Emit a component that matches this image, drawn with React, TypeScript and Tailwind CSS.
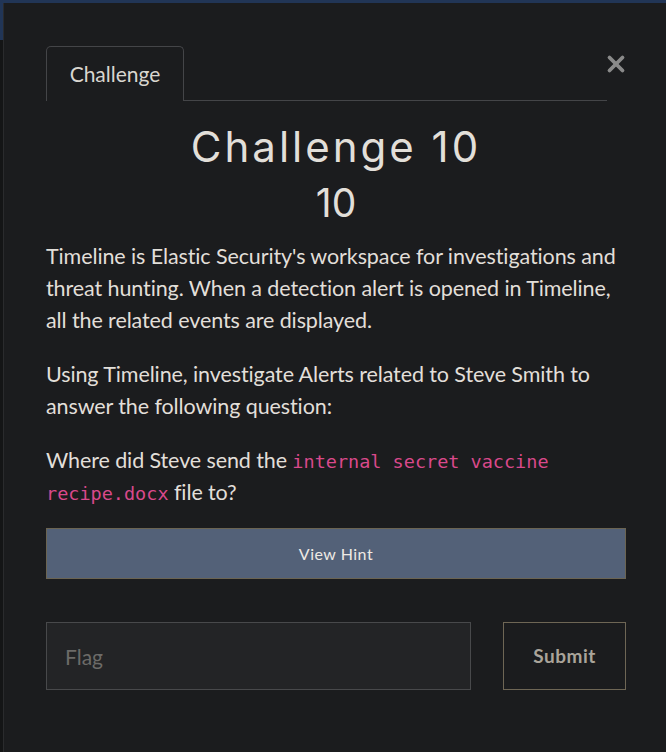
import { X } from "lucide-react";

export default function App() {
    return (
        <div className="relative h-[752px] w-[666px] overflow-hidden bg-[#141516]" style={{ fontFamily: "Lato, 'Open Sans', sans-serif" }}>
            {/* backdrop header strip */}
            <div className="absolute left-0 top-0 h-[40px] w-full bg-[#213556]" />

            {/* Modal */}
            <div className="absolute left-[3px] top-[3px] h-[800px] w-[700px] border-l border-[#2a2b2d] bg-[#1b1c1e]">
                <div className="w-[623px] pl-[42px] pt-[44px]">
                    {/* Tabs */}
                    <div className="flex items-start">
                        <div className="flex h-[54px] flex-1 items-end border-b border-[#444548]">
                            <div className="-mb-px flex h-[55px] w-[138px] items-center justify-center rounded-t-[5px] border border-b-0 border-[#444548] bg-[#1b1c1e] text-[21px] text-[#d9d6d0]">
                                Challenge
                            </div>
                        </div>
                        <button className="mt-[4px] h-[26px] w-[20px] text-[#8a8a8a]">
                            <X className="-ml-[4px]" size={26} strokeWidth={3.5} />
                        </button>
                    </div>

                    <div className="w-[580px]">
                        <div style={{ fontFamily: "Inter, 'Noto Sans', sans-serif" }}>
                            <h1 className="mt-[22px] text-center text-[42px] leading-[48px] tracking-[3px] text-[#e2dfd9]">
                                Challenge 10
                            </h1>
                            <h2 className="mt-[12px] text-center text-[39px] leading-[40px] text-[#e2dfd9]">10</h2>
                        </div>

                        <div className="mt-[17px] text-[21.5px] leading-[32px] tracking-[-0.1px] text-[#e2dfd9]">
                            <p>
                                Timeline is Elastic Security's workspace for investigations and threat hunting. When a detection alert is opened in Timeline, all the related events are displayed.
                            </p>
                            <p className="mt-[22px]">
                                Using Timeline, investigate Alerts related to Steve Smith to answer the following question:
                            </p>
                            <p className="mt-[22px]">
                                Where did Steve send the{" "}
                                <code className="text-[18.5px] leading-none tracking-normal text-[#d9498b]" style={{ fontFamily: "'DejaVu Sans Mono', monospace" }}>
                                    internal secret vaccine recipe.docx
                                </code>{" "}
                                file to?
                            </p>
                        </div>

                        <button className="mt-[20px] flex h-[51px] w-full items-center justify-center border border-[#6b6452] bg-[#536178] text-[16px] tracking-[0.5px] text-[#eeeae4]">
                            View Hint
                        </button>

                        <div className="mt-[43px] flex gap-[32px]">
                            <input
                                placeholder="Flag"
                                className="h-[68px] w-[425px] border border-[#48494b] bg-[#232426] px-[18px] text-[21px] text-[#d9d6d0] outline-none placeholder:text-[#6c6b68]"
                            />
                            <button className="h-[68px] w-[123px] border border-[#6e6655] bg-[#1b1c1e] text-[19px] font-bold tracking-[0.5px] text-[#aaa49a]">
                                Submit
                            </button>
                        </div>
                    </div>
                </div>
            </div>
        </div>
    );
}
